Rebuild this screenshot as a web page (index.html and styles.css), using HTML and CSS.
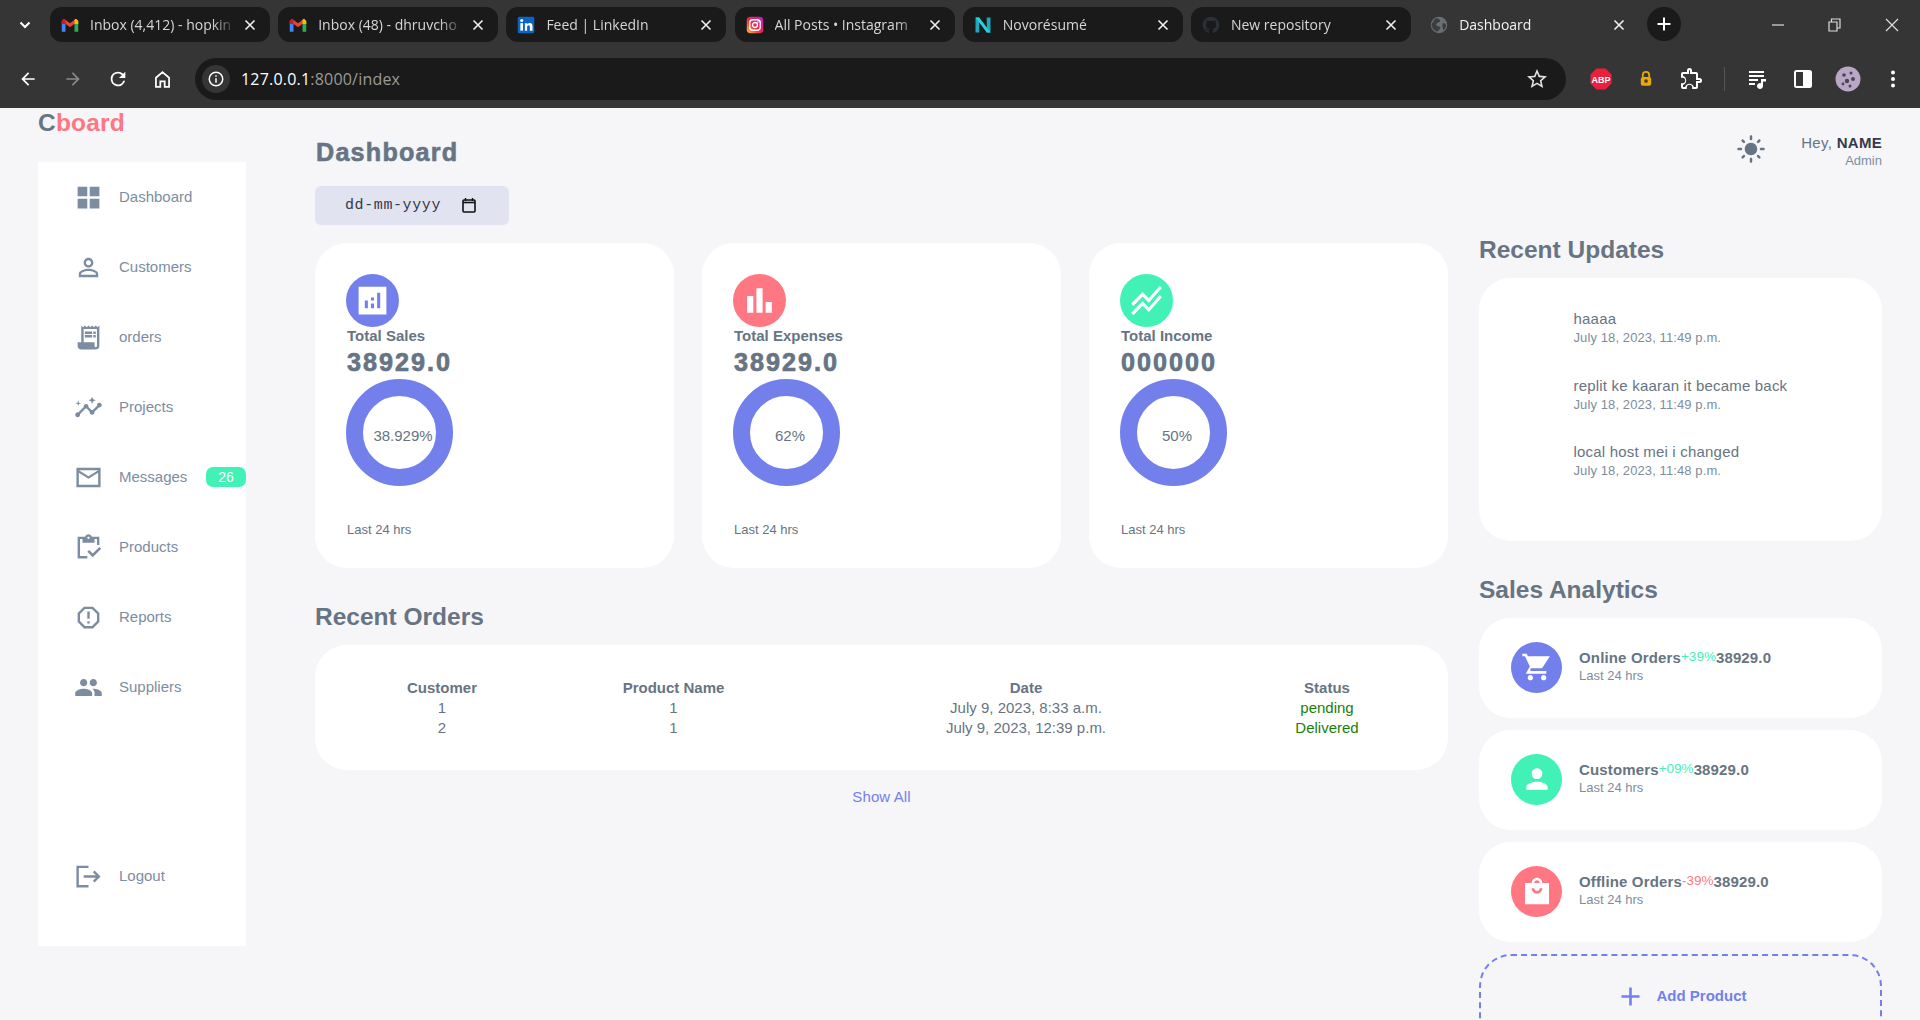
FILE: index.html
```html
<!DOCTYPE html>
<html>
  <head>
    <meta charset="utf-8">
    <title>Dashboard</title>
    <link rel="stylesheet" href="styles.css">
  </head>
  <body>

    <svg class="sprite" width="0" height="0">
      <symbol id="gmail" viewBox="0 0 24 24">
        <path fill="#4285f4" d="M1 6.5V21h5V10.5z"/>
        <path fill="#34a853" d="M18 10.5V21h5V6.5z"/>
        <path fill="#ea4335" d="M1 6.5 4 3.5l8 6.2 8-6.2 3 3L12 15z"/>
        <path fill="#fbbc04" d="M20 3.5l3 3v4h-5V5z"/>
        <path fill="#c5221f" d="M1 6.5l3-3 2 1.5v5.5H1z"/>
      </symbol>
      <symbol id="close" viewBox="0 0 12 12">
        <path d="M1.5 1.5l9 9M10.5 1.5l-9 9" stroke="currentColor" stroke-width="1.6" fill="none"/>
      </symbol>
    </svg>

    <div id="browser">
      <div class="tabbar">
        <div class="tab-menu">
          <svg width="14" height="14" viewBox="0 0 14 14"><path d="M2.5 4.5 7 9l4.5-4.500" stroke="#fff" stroke-width="2" fill="none"/></svg>
        </div>
        <div class="tabs">
          <div class="tab">
            <svg class="favicon"><use href="#gmail"/></svg>
            <span class="tab-title">Inbox (4,412) - hopkin</span>
            <svg class="tab-close"><use href="#close"/></svg>
          </div>
          <div class="tab">
            <svg class="favicon"><use href="#gmail"/></svg>
            <span class="tab-title">Inbox (48) - dhruvcho</span>
            <svg class="tab-close"><use href="#close"/></svg>
          </div>
          <div class="tab">
            <svg class="favicon" viewBox="0 0 24 24">
              <rect x="1" y="1" width="22" height="22" rx="2" fill="#0a66c2"/>
              <rect x="4.5" y="9.5" width="3.5" height="10" fill="#fff"/>
              <circle cx="6.25" cy="6" r="2" fill="#fff"/>
              <path fill="#fff" d="M10.5 9.5h3.3V11c.6-1 1.8-1.800 3.3-1.800 2.800 0 3.600 1.800 3.600 4.500v5.800h-3.500v-5c0-1.300-.3-2.300-1.600-2.300s-2.100 1-2.100 2.400v4.900h-3z"/>
            </svg>
            <span class="tab-title">Feed | LinkedIn</span>
            <svg class="tab-close"><use href="#close"/></svg>
          </div>
          <div class="tab">
            <svg class="favicon" viewBox="0 0 24 24">
              <defs>
                <linearGradient id="insta" x1="0" y1="1" x2="1" y2="0">
                  <stop offset="0" stop-color="#fdc03a"/>
                  <stop offset=".45" stop-color="#f0264f"/>
                  <stop offset="1" stop-color="#b425c4"/>
                </linearGradient>
              </defs>
              <rect x="1" y="1" width="22" height="22" rx="5" fill="url(#insta)"/>
              <rect x="5" y="5" width="14" height="14" rx="4" fill="none" stroke="#fff" stroke-width="1.8"/>
              <circle cx="12" cy="12" r="3.3" fill="none" stroke="#fff" stroke-width="1.8"/>
              <circle cx="16" cy="8" r="1" fill="#fff"/>
            </svg>
            <span class="tab-title">All Posts • Instagram</span>
            <svg class="tab-close"><use href="#close"/></svg>
          </div>
          <div class="tab">
            <svg class="favicon" viewBox="0 0 24 24">
              <path fill="#1fa8bd" d="M2 2h5v20H2zM17 2h5v20h-5z"/>
              <path fill="#2bd0df" d="M2 2h5l15 20h-5z"/>
            </svg>
            <span class="tab-title">Novorésumé</span>
            <svg class="tab-close"><use href="#close"/></svg>
          </div>
          <div class="tab">
            <svg class="favicon" viewBox="0 0 24 24">
              <path fill="#2b3138" d="M12 1C5.9 1 1 5.9 1 12c0 4.9 3.2 9 7.5 10.5.6.1.8-.2.8-.5v-2c-3 .6-3.7-1.3-3.7-1.3-.5-1.3-1.2-1.6-1.200-1.600-1-.7.1-.7.1-.7 1.100.1 1.700 1.100 1.700 1.100 1 1.700 2.600 1.200 3.200.9.1-.7.4-1.200.7-1.500-2.400-.3-5-1.200-5-5.400 0-1.200.4-2.200 1.100-2.900-.1-.3-.5-1.400.1-2.900 0 0 .9-.3 3 1.100a10 10 0 0 1 5.400 0c2.100-1.400 3-1.100 3-1.100.6 1.500.2 2.600.1 2.900.7.7 1.100 1.700 1.100 2.900 0 4.200-2.600 5.100-5 5.400.4.3.7 1 .7 2v3c0 .3.2.6.8.5C19.8 21 23 16.900 23 12c0-6.100-4.900-11-11-11z"/>
            </svg>
            <span class="tab-title">New repository</span>
            <svg class="tab-close"><use href="#close"/></svg>
          </div>
          <div class="tab tab-active">
            <svg class="favicon" viewBox="0 0 24 24">
              <circle cx="12" cy="12" r="11" fill="#6b6e72"/>
              <path fill="#3c3d40" d="M9 2.5c3 1 5 2.500 4.500 4.500s-4 1.500-5 3.500 2 3 4 3.500 1.500 3-.5 4.500-2.500 2.500-3.500 2C5 19 2.500 16 2 12c2-5 4-8 7-9.500zM17 10c2-.5 3.500 0 4.500 1.500 0 3-1.500 6-3.500 7.500-1-2-2-7-1-9z"/>
            </svg>
            <span class="tab-title">Dashboard</span>
            <svg class="tab-close"><use href="#close"/></svg>
          </div>
          <div class="new-tab">
            <svg width="16" height="16" viewBox="0 0 16 16"><path d="M8 1.5v13M1.5 8h13" stroke="#fff" stroke-width="2"/></svg>
          </div>
        </div>
        <div class="win-controls">
          <div class="win-btn"><svg width="12" height="12" viewBox="0 0 12 12"><path d="M0 6h12" stroke="#ddd" stroke-width="1.2"/></svg></div>
          <div class="win-btn"><svg width="13" height="14" viewBox="0 0 13 14"><path d="M1 4h8v9H1zM3.5 4V1H12v9H9" stroke="#ddd" stroke-width="1.2" fill="none"/></svg></div>
          <div class="win-btn"><svg width="14" height="14" viewBox="0 0 14 14"><path d="M1 1l12 12M13 1 1 13" stroke="#ddd" stroke-width="1.2"/></svg></div>
        </div>
      </div>

      <div class="toolbar">
        <div class="tool-btn"><svg width="20" height="20" viewBox="0 0 24 24" fill="#fff"><path d="M20 11H7.83l5.59-5.59L12 4l-8 8 8 8 1.41-1.41L7.83 13H20z"/></svg></div>
        <div class="tool-btn"><svg width="20" height="20" viewBox="0 0 24 24" fill="#8a8a8a"><path d="M12 4l-1.41 1.41L16.17 11H4v2h12.17l-5.58 5.59L12 20l8-8z"/></svg></div>
        <div class="tool-btn"><svg width="22" height="22" viewBox="0 0 24 24" fill="#fff"><path d="M17.65 6.35A7.96 7.96 0 0 0 12 4a8 8 0 1 0 7.73 10h-2.08A6 6 0 1 1 12 6c1.66 0 3.14.69 4.22 1.78L13 11h7V4z"/></svg></div>
        <div class="tool-btn"><svg width="21" height="21" viewBox="0 0 24 24" fill="none" stroke="#fff" stroke-width="2"><path d="M12 3.5 4.5 10v10.5h5V14h5v6.5h5V10z"/></svg></div>
        <div class="omnibox">
          <div class="site-info">
            <svg width="18" height="18" viewBox="0 0 24 24" fill="#fff"><path d="M11 7h2v2h-2zm0 4h2v6h-2zm1-9a10 10 0 1 0 0 20 10 10 0 0 0 0-20zm0 18a8 8 0 1 1 0-16 8 8 0 0 1 0 16z"/></svg>
          </div>
          <div class="url"><span class="url-host">127.0.0.1</span>:8000/index</div>
          <svg class="star" width="24" height="24" viewBox="0 0 24 24" fill="#e3e3e3"><path d="M22 9.24l-7.19-.62L12 2 9.19 8.63 2 9.24l5.46 4.73L5.82 21 12 17.27 18.18 21l-1.63-7.03L22 9.24zM12 15.4l-3.76 2.27 1-4.28-3.32-2.88 4.38-.38L12 6.1l1.71 4.04 4.38.38-3.32 2.88 1 4.28L12 15.4z"/></svg>
        </div>
        <div class="tool-right">
          <div class="tool-btn">
            <svg width="24" height="24" viewBox="0 0 24 24">
              <path fill="#ed1f3c" d="M7.5 1.5h9l6 6v9l-6 6h-9l-6-6v-9z"/>
              <text x="12" y="15.5" text-anchor="middle" class="abp-text">ABP</text>
            </svg>
          </div>
          <div class="tool-btn">
            <svg width="16" height="18" viewBox="0 0 20 22">
              <path d="M6 9V6a4 4 0 0 1 8 0v3" fill="none" stroke="#e8a90d" stroke-width="2.2"/>
              <rect x="3.5" y="8.5" width="13" height="11" rx="2.5" fill="#e8a90d"/>
              <circle cx="10" cy="13.5" r="2.3" fill="#4a3a10"/>
            </svg>
          </div>
          <div class="tool-btn"><svg width="24" height="24" viewBox="0 0 24 24" fill="#fff"><path d="M20.5 11H19V7a2 2 0 0 0-2-2h-4V3.5a2.5 2.5 0 0 0-5 0V5H4a2 2 0 0 0-2 2v3.800h1.5a2.700 2.700 0 0 1 0 5.400H2V20a2 2 0 0 0 2 2h3.800v-1.500a2.700 2.700 0 0 1 5.400 0V22H17a2 2 0 0 0 2-2v-4h1.500a2.500 2.500 0 0 0 0-5zm0 3H17v6h-2.100c-.5-1.900-2.300-3.200-4.400-3.200S6.600 18.100 6.100 20H4v-2.100c1.900-.5 3.200-2.300 3.200-4.400S5.900 9.600 4 9.100V7h6V3.500a.5.5 0 0 1 1 0V7h6v6h3.500a.5.5 0 0 1 0 1z"/></svg></div>
          <div class="tool-sep"></div>
          <div class="tool-btn"><svg width="22" height="22" viewBox="0 0 22 22" fill="#fff"><path d="M2 3h15v2H2zM2 7h15v2H2zM2 11h9v2H2zM2 15h6v2H2zM14 11h5v2.5h-3V18a3 3 0 1 1-2-2.800z"/></svg></div>
          <div class="tool-btn"><svg width="22" height="22" viewBox="0 0 22 22"><rect x="3" y="3" width="16" height="16" rx="1.500" fill="none" stroke="#fff" stroke-width="2"/><rect x="11" y="3" width="8" height="16" fill="#fff"/></svg></div>
          <div class="tool-btn">
            <svg width="26" height="26" viewBox="0 0 26 26">
              <circle cx="13" cy="13" r="12.5" fill="#b9a7c6"/>
              <circle cx="9" cy="9" r="1.8" fill="#4c4455"/>
              <circle cx="16" cy="7" r="1.5" fill="#4c4455"/>
              <circle cx="18" cy="13" r="2" fill="#4c4455"/>
              <circle cx="12" cy="15" r="2.2" fill="#4c4455"/>
              <circle cx="8" cy="18" r="1.4" fill="#4c4455"/>
              <circle cx="15" cy="20" r="1.5" fill="#4c4455"/>
            </svg>
          </div>
          <div class="tool-btn"><svg width="20" height="20" viewBox="0 0 20 20" fill="#fff"><circle cx="10" cy="3.5" r="2"/><circle cx="10" cy="10" r="2"/><circle cx="10" cy="16.5" r="2"/></svg></div>
        </div>
      </div>
    </div>

    <div id="app">
      <div class="side-col">
        <div class="logo">C<span class="logo-accent">board</span></div>
        <div class="sidebar">
          <a class="nav-item">
            <svg class="nav-icon" viewBox="0 0 24 24"><path d="M3 3h8v8H3zM13 3h8v8h-8zM3 13h8v8H3zM13 13h8v8h-8z"/></svg>
            Dashboard
          </a>
          <a class="nav-item">
            <svg class="nav-icon" viewBox="0 0 24 24"><path d="M12 5.9c1.16 0 2.1.94 2.1 2.1s-.94 2.1-2.1 2.1S9.9 9.16 9.9 8s.94-2.1 2.1-2.1m0 9c2.97 0 6.1 1.46 6.1 2.1v1.1H5.9V17c0-.64 3.13-2.1 6.1-2.1M12 4C9.79 4 8 5.79 8 8s1.79 4 4 4 4-1.79 4-4-1.79-4-4-4zm0 9c-2.67 0-8 1.34-8 4v3h16v-3c0-2.66-5.33-4-8-4z"/></svg>
            Customers
          </a>
          <a class="nav-item">
            <svg class="nav-icon" viewBox="0 0 24 24"><path d="M19.5 3.5L18 2l-1.5 1.5L15 2l-1.5 1.5L12 2l-1.5 1.5L9 2 7.5 3.5 6 2v14H3v3c0 1.66 1.34 3 3 3h12c1.66 0 3-1.34 3-3V2l-1.5 1.5zM19 19c0 .55-.45 1-1 1s-1-.45-1-1v-3H8V5h11v14zM9 7h6v2H9zM16 7h2v2h-2zM9 10h6v2H9zM16 10h2v2h-2z"/></svg>
            orders
          </a>
          <a class="nav-item">
            <svg class="nav-icon" viewBox="0 0 24 24"><path d="M21 8c-1.45 0-2.26 1.44-1.93 2.51l-3.55 3.56c-.3-.09-.74-.09-1.04 0l-2.55-2.55C12.27 10.45 11.46 9 10 9c-1.45 0-2.27 1.44-1.93 2.52l-4.56 4.55C2.44 15.74 1 16.55 1 18c0 1.1.9 2 2 2 1.45 0 2.26-1.44 1.93-2.51l4.55-4.56c.3.09.74.09 1.04 0l2.55 2.55C12.73 16.55 13.54 18 15 18c1.45 0 2.27-1.44 1.93-2.52l3.56-3.55c1.07.33 2.51-.48 2.51-1.93 0-1.1-.9-2-2-2zM15 9l.94-2.07L18 6l-2.06-.93L15 3l-.92 2.07L12 6l2.08.93zM3.5 11L4 9l2-.5L4 8l-.5-2L3 8l-2 .5L3 9z"/></svg>
            Projects
          </a>
          <a class="nav-item">
            <svg class="nav-icon" viewBox="0 0 24 24"><path d="M22 4H2v16h20V4zm-2 14H4V8l8 5 8-5v10zm-8-7L4 6h16l-8 5z"/></svg>
            Messages
            <span class="badge">26</span>
          </a>
          <a class="nav-item">
            <svg class="nav-icon" viewBox="0 0 24 24"><path d="M5 5h2v3h10V5h2v5h2V3h-6.18C14.4 1.84 13.3 1 12 1s-2.4.84-2.82 2H3v18h8v-2H5V5zm7-2c.55 0 1 .45 1 1s-.45 1-1 1-1-.45-1-1 .45-1 1-1zM21 11.5L15.51 17l-3.01-3-1.5 1.5 4.51 4.5 6.99-7z"/></svg>
            Products
          </a>
          <a class="nav-item">
            <svg class="nav-icon" viewBox="0 0 24 24"><path d="M15.73 3H8.27L3 8.27v7.46L8.27 21h7.46L21 15.73V8.27L15.73 3zM19 14.9L14.9 19H9.1L5 14.9V9.1L9.1 5h5.8L19 9.1v5.8zM11 7h2v6h-2zM11 15h2v2h-2z"/></svg>
            Reports
          </a>
          <a class="nav-item">
            <svg class="nav-icon" viewBox="0 0 24 24"><path d="M16 11c1.66 0 2.99-1.34 2.99-3S17.66 5 16 5c-1.66 0-3 1.34-3 3s1.34 3 3 3zm-8 0c1.66 0 2.99-1.34 2.99-3S9.66 5 8 5C6.34 5 5 6.34 5 8s1.34 3 3 3zm0 2c-2.33 0-7 1.17-7 3.5V19h14v-2.5c0-2.33-4.67-3.5-7-3.5zm8 0c-.29 0-.62.02-.97.05 1.16.84 1.97 1.97 1.97 3.45V19h6v-2.5c0-2.33-4.67-3.5-7-3.5z"/></svg>
            Suppliers
          </a>
          <a class="nav-item nav-logout">
            <svg class="nav-icon" viewBox="0 0 24 24"><path d="M17 7l-1.41 1.41L18.17 11H8v2h10.17l-2.58 2.58L17 17l5-5zM4 5h8V3H2v18h10v-2H4z"/></svg>
            Logout
          </a>
        </div>
      </div>

      <div class="main">
        <h1>Dashboard</h1>
        <div class="date-field">
          <span>dd-mm-yyyy</span>
          <svg class="date-icon" width="14" height="15" viewBox="0 0 14 15"><path d="M3.5 0v3M10.5 0v3" stroke="#111" stroke-width="1.4"/><rect x="1" y="2" width="12" height="12" rx="1" fill="none" stroke="#111" stroke-width="1.6"/><path d="M1 4.500h12" stroke="#111" stroke-width="1.6"/></svg>
        </div>

        <div class="insights">
          <div class="card">
            <div class="circle circle-primary">
              <svg class="card-icon" viewBox="0 0 24 24"><path d="M3 3v18h18V3H3zm6 14H7v-5h2v5zm4 0h-2v-3h2v3zm0-5h-2v-2h2v2zm4 5h-2V7h2v10z"/></svg>
            </div>
            <div class="card-label">Total Sales</div>
            <div class="card-value">38929.0</div>
            <div class="donut"><span>38.929%</span></div>
            <div class="card-foot">Last 24 hrs</div>
          </div>
          <div class="card">
            <div class="circle circle-danger">
              <svg class="card-icon" viewBox="0 0 24 24"><path d="M4 9h4v11H4zM16 13h4v7h-4zM10 4h4v16h-4z"/></svg>
            </div>
            <div class="card-label">Total Expenses</div>
            <div class="card-value">38929.0</div>
            <div class="donut"><span>62%</span></div>
            <div class="card-foot">Last 24 hrs</div>
          </div>
          <div class="card">
            <div class="circle circle-success">
              <svg class="card-icon" viewBox="0 0 24 24"><path d="M2 19.99l7.5-7.51 4 4 7.09-7.97L22 9.92l-8.5 9.56-4-4-6 6.01-1.5-1.5zm1.5-4.500l6-6.010 4 4L22 3.920l-1.410-1.410-7.090 7.970-4-4L2 13.990l1.500 1.500z"/></svg>
            </div>
            <div class="card-label">Total Income</div>
            <div class="card-value">000000</div>
            <div class="donut"><span>50%</span></div>
            <div class="card-foot">Last 24 hrs</div>
          </div>
        </div>

        <h2 class="orders-title">Recent Orders</h2>
        <div class="orders">
          <table>
            <colgroup>
              <col class="col-customer">
              <col class="col-product">
              <col class="col-date">
              <col class="col-status">
            </colgroup>
            <thead>
              <tr>
                <th>Customer</th>
                <th>Product Name</th>
                <th>Date</th>
                <th>Status</th>
              </tr>
            </thead>
            <tbody>
              <tr>
                <td>1</td>
                <td>1</td>
                <td>July 9, 2023, 8:33 a.m.</td>
                <td class="status">pending</td>
              </tr>
              <tr>
                <td>2</td>
                <td>1</td>
                <td>July 9, 2023, 12:39 p.m.</td>
                <td class="status">Delivered</td>
              </tr>
            </tbody>
          </table>
        </div>
        <a class="show-all">Show All</a>
      </div>

      <div class="right">
        <div class="top-user">
          <svg class="sun" viewBox="0 0 24 24"><path d="M12 7c-2.76 0-5 2.24-5 5s2.24 5 5 5 5-2.24 5-5-2.24-5-5-5zM2 13h2c.55 0 1-.45 1-1s-.45-1-1-1H2c-.55 0-1 .45-1 1s.45 1 1 1zm18 0h2c.55 0 1-.45 1-1s-.45-1-1-1h-2c-.55 0-1 .45-1 1s.45 1 1 1zM11 2v2c0 .55.45 1 1 1s1-.45 1-1V2c0-.55-.45-1-1-1s-1 .45-1 1zm0 18v2c0 .55.45 1 1 1s1-.45 1-1v-2c0-.55-.45-1-1-1s-1 .45-1 1zM5.99 4.58c-.39-.39-1.03-.39-1.41 0-.39.39-.39 1.03 0 1.41l1.06 1.06c.39.39 1.03.39 1.41 0s.39-1.03 0-1.41L5.99 4.58zm12.37 12.37c-.39-.39-1.03-.39-1.41 0-.39.39-.39 1.03 0 1.41l1.06 1.06c.39.39 1.03.39 1.41 0 .39-.39.39-1.03 0-1.41l-1.06-1.06zm1.06-10.96c.39-.39.39-1.03 0-1.41-.39-.39-1.03-.39-1.41 0l-1.06 1.06c-.39.39-.39 1.03 0 1.41s1.03.39 1.41 0l1.06-1.06zM7.05 18.36c.39-.39.39-1.03 0-1.41-.39-.39-1.03-.39-1.41 0l-1.06 1.06c-.39.39-.39 1.03 0 1.41s1.03.39 1.41 0l1.06-1.06z"/></svg>
          <div class="user-info">
            <div class="user-name">Hey, <b>NAME</b></div>
            <div class="user-role">Admin</div>
          </div>
        </div>

        <h2 class="updates-title">Recent Updates</h2>
        <div class="updates">
          <div class="update">
            <div>haaaa</div>
            <div class="update-time">July 18, 2023, 11:49 p.m.</div>
          </div>
          <div class="update">
            <div>replit ke kaaran it became back</div>
            <div class="update-time">July 18, 2023, 11:49 p.m.</div>
          </div>
          <div class="update">
            <div>local host mei i changed</div>
            <div class="update-time">July 18, 2023, 11:48 p.m.</div>
          </div>
        </div>

        <h2 class="sales-title">Sales Analytics</h2>
        <div class="sales-list">
          <div class="sale">
            <div class="sale-circle circle-primary">
              <svg class="sale-icon" viewBox="0 0 24 24"><path d="M7 18c-1.1 0-1.99.9-1.99 2S5.9 22 7 22s2-.9 2-2-.9-2-2-2zm10 0c-1.1 0-1.99.9-1.99 2s.89 2 1.99 2 2-.9 2-2-.9-2-2-2zm-9.8-5h7.45c.75 0 1.41-.41 1.75-1.030L21.7 4H5.21l-.94-2H1v2h2l3.6 7.59L3.62 17H19v-2H7.01z"/></svg>
            </div>
            <div class="sale-text">
              <div class="sale-title">Online Orders<span class="pct pct-up">+39%</span>38929.0</div>
              <div class="sale-sub">Last 24 hrs</div>
            </div>
          </div>
          <div class="sale">
            <div class="sale-circle circle-success">
              <svg class="sale-icon" viewBox="0 0 24 24"><path d="M12 12c2.21 0 4-1.79 4-4s-1.79-4-4-4-4 1.79-4 4 1.79 4 4 4zm0 2c-2.67 0-8 1.34-8 4v2h16v-2c0-2.66-5.33-4-8-4z"/></svg>
            </div>
            <div class="sale-text">
              <div class="sale-title">Customers<span class="pct pct-up">+09%</span>38929.0</div>
              <div class="sale-sub">Last 24 hrs</div>
            </div>
          </div>
          <div class="sale">
            <div class="sale-circle circle-danger">
              <svg class="sale-icon" viewBox="0 0 24 24"><path d="M21 6h-5c0-2.21-1.79-4-4-4S8 3.79 8 6H3v16h18V6zm-9-2c1.1 0 2 .9 2 2h-4c0-1.1.9-2 2-2zm0 10c-2.21 0-4-1.79-4-4h2c0 1.1.9 2 2 2s2-.9 2-2h2c0 2.21-1.79 4-4 4z"/></svg>
            </div>
            <div class="sale-text">
              <div class="sale-title">Offline Orders<span class="pct pct-down">-39%</span>38929.0</div>
              <div class="sale-sub">Last 24 hrs</div>
            </div>
          </div>
        </div>
        <div class="add-product">
          <svg class="add-icon" viewBox="0 0 24 24"><path d="M19 13h-6v6h-2v-6H5v-2h6V5h2v6h6v2z"/></svg>
          Add Product
        </div>
      </div>
    </div>

  </body>
</html>
```

FILE: styles.css
```css
* {
  box-sizing: border-box;
}

html, body {
  margin: 0;
  height: 100%;
  overflow: hidden;
}

body {
  background: #f6f6f9;
  color: #677483;
  font-family: "Liberation Sans", Arial, sans-serif;
  font-size: 15px;
  line-height: 18px;
}

h1, h2 {
  margin: 0;
  line-height: 30px;
  color: #677483;
}

h2 {
  font-size: 24.5px;
}

.sprite {
  position: absolute;
}

/* browser frame */

#browser {
  height: 108px;
  background: #353535;
  font-family: "Open Sans", sans-serif;
}

.tabbar {
  display: flex;
  height: 50px;
}

.tab-menu {
  width: 50px;
  display: flex;
  align-items: center;
  justify-content: center;
}

.tabs {
  display: flex;
  gap: 8.2px;
  padding-top: 7px;
}

.tab {
  display: flex;
  align-items: center;
  width: 220px;
  height: 35px;
  padding: 0 14px 0 11px;
  background: #1a1a1a;
  border-radius: 12px;
  color: #d6d6d6;
  font-size: 14px;
}

.tab-active {
  background: none;
  color: #f2f2f2;
}

.favicon {
  width: 18px;
  height: 18px;
  flex: none;
}

.tab-title {
  flex: 1;
  margin: 0 8px 0 11px;
  white-space: nowrap;
  overflow: hidden;
  -webkit-mask-image: linear-gradient(to left, transparent, #000 24px);
  mask-image: linear-gradient(to left, transparent, #000 24px);
}

.tab-close {
  width: 12px;
  height: 12px;
  flex: none;
  color: #f0f0f0;
}

.new-tab {
  display: flex;
  align-items: center;
  justify-content: center;
  width: 34px;
  height: 34px;
  background: #1a1a1a;
  border-radius: 50%;
}

.win-controls {
  display: flex;
  margin-left: auto;
}

.win-btn {
  display: flex;
  align-items: center;
  justify-content: center;
  width: 57px;
  height: 50px;
}

.toolbar {
  display: flex;
  align-items: center;
  height: 58px;
  padding: 8px 5px;
}

.tool-btn {
  display: flex;
  align-items: center;
  justify-content: center;
  width: 45px;
  height: 42px;
  flex: none;
}

.omnibox {
  display: flex;
  align-items: center;
  width: 1371px;
  height: 42px;
  margin-left: 10px;
  padding: 0 17px 0 7px;
  background: #1a1a1a;
  border-radius: 21px;
  flex: none;
}

.site-info {
  display: flex;
  align-items: center;
  justify-content: center;
  width: 28px;
  height: 28px;
  background: #353535;
  border-radius: 50%;
}

.url {
  margin-left: 11px;
  color: #9a9a9a;
  font-size: 16px;
  letter-spacing: .2px;
}

.url-host {
  color: #fff;
}

.star {
  margin-left: auto;
}

.tool-right {
  display: flex;
  align-items: center;
  margin-left: 12px;
}

.tool-sep {
  width: 22px;
  height: 24px;
  background: linear-gradient(#555, #555) center / 1px 100% no-repeat;
}

.abp-text {
  fill: #fff;
  font-family: "Liberation Sans", sans-serif;
  font-size: 9px;
  font-weight: 700;
}

/* page */

#app {
  display: grid;
  grid-template-columns: 208px 1fr 403px;
  column-gap: 31px;
  padding: 0 38px;
}

.logo {
  height: 54px;
  padding-top: 1px;
  line-height: 27px;
  font-size: 24.5px;
  font-weight: 700;
  letter-spacing: .2px;
}

.logo-accent {
  color: #ff7782;
}

.sidebar {
  display: flex;
  flex-direction: column;
  height: 784px;
  padding-bottom: 35px;
  background: #fff;
}

.nav-item {
  display: flex;
  align-items: center;
  gap: 16.5px;
  height: 70px;
  padding-left: 35.5px;
  color: #7d8da1;
  flex: none;
}

.nav-icon {
  width: 29px;
  height: 29px;
  fill: #7d8da1;
  flex: none;
}

.nav-logout {
  margin-top: auto;
}

.badge {
  margin-left: auto;
  width: 40px;
  height: 20px;
  background: #41f1b6;
  border-radius: 7px;
  color: #fff;
  font-size: 14px;
  line-height: 20px;
  text-align: center;
}

.main {
  padding: 29px 0 0 38px;
}

h1 {
  padding-left: 1px;
  font-size: 25.2px;
  font-weight: 800;
  letter-spacing: 1.2px;
  -webkit-text-stroke: .6px #677483;
}

.date-field {
  display: flex;
  align-items: center;
  width: 194px;
  height: 39px;
  margin-top: 19px;
  padding: 0 33px 0 30px;
  background: #e2e3f0;
  border-radius: 6px;
  color: #363949;
  font-family: "Liberation Mono", monospace;
  font-size: 15px;
  letter-spacing: .6px;
}

.date-icon {
  margin-left: auto;
}

.insights {
  display: grid;
  grid-template-columns: repeat(3, 359px);
  column-gap: 28px;
  margin-top: 18px;
}

.card {
  height: 325px;
  padding: 31px;
  background: #fff;
  border-radius: 32px;
}

.circle {
  display: flex;
  align-items: center;
  justify-content: center;
  width: 53px;
  height: 53px;
  border-radius: 50%;
}

.circle-primary {
  background: #7380ec;
}

.circle-danger {
  background: #ff7782;
}

.circle-success {
  background: #41f1b6;
}

.card-icon {
  width: 37px;
  height: 37px;
  fill: #fff;
}

.card-label {
  padding-left: 1px;
  font-weight: 700;
}

.card-value {
  margin-top: 2px;
  padding-left: 1px;
  line-height: 30px;
  font-size: 25.2px;
  font-weight: 800;
  letter-spacing: 2px;
  -webkit-text-stroke: .7px #677483;
}

.donut {
  display: flex;
  align-items: center;
  justify-content: center;
  width: 107px;
  height: 107px;
  margin-top: 2px;
  padding: 6px 0 0 7px;
  border: 17px solid #7380ec;
  border-radius: 50%;
  white-space: nowrap;
}

.card-foot {
  margin-top: 36px;
  padding-left: 1px;
  font-size: 13px;
  line-height: 16px;
}

.orders-title {
  margin-top: 34px;
}

.orders {
  height: 125px;
  margin-top: 13px;
  padding: 33px 36px 0 32px;
  background: #fff;
  border-radius: 32px;
}

table {
  width: 100%;
  border-collapse: collapse;
  table-layout: fixed;
}

th, td {
  padding: 0;
  height: 20px;
  text-align: center;
  font-size: 15px;
}

.col-customer {
  width: 190px;
}

.col-product {
  width: 273px;
}

.col-date {
  width: 432px;
}

.status {
  color: #1a8009;
}

.show-all {
  display: block;
  margin-top: 18px;
  text-align: center;
  color: #7380ec;
  letter-spacing: .1px;
}

.top-user {
  display: flex;
  justify-content: flex-end;
  align-items: flex-start;
  gap: 35px;
  padding-top: 26px;
}

.sun {
  width: 30px;
  height: 30px;
  fill: #677483;
}

.user-info {
  text-align: right;
}

.user-name {
  letter-spacing: .3px;
}

.user-info b {
  color: #363949;
}

.user-role {
  color: #7d8da1;
  font-size: 13px;
}

.updates-title {
  margin-top: 65px;
}

.updates {
  display: flex;
  flex-direction: column;
  gap: 29.5px;
  height: 263px;
  margin-top: 13px;
  padding: 32px 0 0 94.5px;
  background: #fff;
  border-radius: 32px;
  letter-spacing: .2px;
}

.update-time {
  padding-top: 1px;
  color: #7d8da1;
  font-size: 13px;
  letter-spacing: .1px;
}

.sales-title {
  margin-top: 34px;
}

.sales-list {
  display: flex;
  flex-direction: column;
  gap: 12px;
  margin-top: 13px;
}

.sale {
  display: flex;
  align-items: center;
  gap: 17px;
  height: 100px;
  padding-left: 32px;
  background: #fff;
  border-radius: 32px;
}

.sale-circle {
  display: flex;
  align-items: center;
  justify-content: center;
  width: 51px;
  height: 51px;
  margin-bottom: 2px;
  border-radius: 50%;
}

.sale-icon {
  width: 32px;
  height: 32px;
  fill: #fff;
}

.sale-text {
  padding-bottom: 4px;
}

.sale-title {
  font-weight: 700;
  letter-spacing: .15px;
}

.pct {
  font-size: 13.5px;
  font-weight: 400;
  letter-spacing: 0;
  vertical-align: 2px;
}

.pct-up {
  color: #41f1b6;
}

.pct-down {
  color: #ff7782;
}

.sale-sub {
  margin-top: 1px;
  color: #7d8da1;
  font-size: 13px;
  line-height: 16px;
}

.add-product {
  display: flex;
  align-items: center;
  justify-content: center;
  gap: 11px;
  height: 100px;
  margin-top: 12px;
  padding-bottom: 16px;
  border: 2px dashed #7380ec;
  border-radius: 32px;
  color: #7380ec;
  font-weight: 700;
}

.add-icon {
  width: 31px;
  height: 31px;
  fill: #7380ec;
}
```
